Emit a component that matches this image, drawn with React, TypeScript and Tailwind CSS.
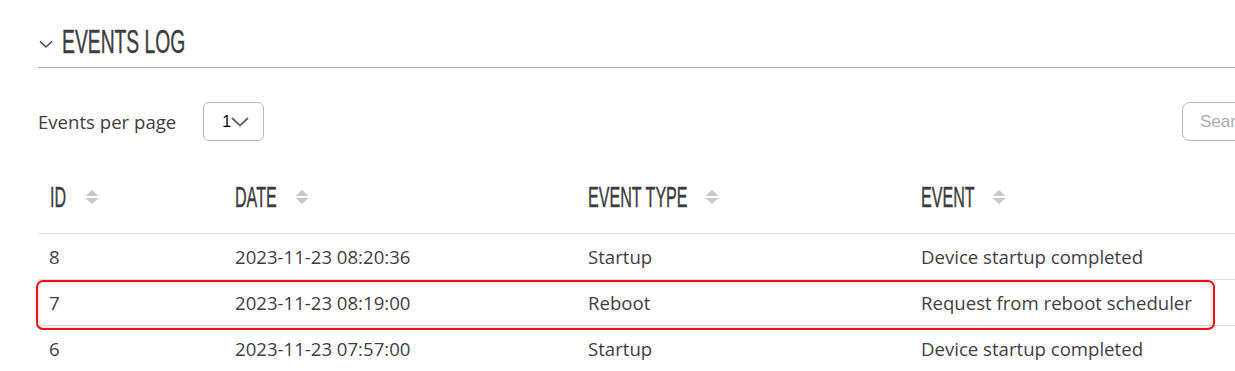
const rows = [
  { id: 8, date: "2023-11-23 08:20:36", type: "Startup", event: "Device startup completed" },
  { id: 7, date: "2023-11-23 08:19:00", type: "Reboot", event: "Request from reboot scheduler" },
  { id: 6, date: "2023-11-23 07:57:00", type: "Startup", event: "Device startup completed" },
];

const columns = [
  { label: "ID", width: "w-[17px]" },
  { label: "DATE", width: "w-[42px]" },
  { label: "EVENT TYPE", width: "w-[99px]" },
  { label: "EVENT", width: "w-[53px]" },
];

const condensed = { fontFamily: '"Liberation Sans", sans-serif' };

function SortIcon() {
  return (
    <svg width="14" height="16" viewBox="0 0 14 16" className="shrink-0">
      <path d="M7 1 L13.5 7 H0.5 Z" fill="#c8c8c8" />
      <path d="M0.5 9 H13.5 L7 15 Z" fill="#c8c8c8" />
    </svg>
  );
}

export default function App() {
  return (
    <div
      className="w-[1235px] h-[371px] overflow-hidden bg-white pl-[38px]"
      style={{ fontFamily: '"Open Sans", sans-serif' }}
    >
      <div className="w-[1344px]">
        {/* Header */}
        <div className="mt-[22px] h-[46px] flex items-start border-b border-[#acacac]">
          <svg width="14" height="9" viewBox="0 0 14 9" className="mt-[18px] ml-[1px]">
            <path d="M1 1.5 L7 7 L13 1.5" fill="none" stroke="#4a4a4a" strokeWidth="1.6" />
          </svg>
          <span className="ml-[9px] w-[124px] h-[40px] whitespace-nowrap">
            <span
              className="inline-block origin-left scale-x-[0.585] text-[33px] leading-[40px] text-[#3d3d3d] [-webkit-text-stroke:0.4px_#3d3d3d]"
              style={condensed}
            >
              EVENTS LOG
            </span>
          </span>
        </div>

        {/* Controls */}
        <div className="mt-[34px] h-[39px] flex items-center justify-between">
          <div className="flex items-center">
            <span className="text-[18.6px] text-[#404040]">Events per page</span>
            <div className="ml-[27px] w-[61px] h-[39px] rounded-md border border-[#b8b8b8] flex items-center pl-[18px]">
              <span className="text-[16px] text-black" style={{ fontFamily: '"Liberation Sans", sans-serif' }}>
                1
              </span>
              <svg width="18" height="10" viewBox="0 0 18 10">
                <path d="M1 1 L9 8.5 L17 1" fill="none" stroke="#666" strokeWidth="2" />
              </svg>
            </div>
          </div>
          <div className="w-[200px] h-[39px] rounded-lg border border-[#b8b8b8] flex items-center pl-[17px]">
            <span className="text-[17px] text-[#a9aeb5]" style={{ fontFamily: '"Liberation Sans", sans-serif' }}>
              Search
            </span>
          </div>
        </div>

        {/* Table */}
        <div className="relative mt-[20px]">
          <div className="grid grid-cols-[185px_353px_333px_1fr] h-[73px] border-b border-[#e2e2e2]">
            {columns.map((col) => (
              <div key={col.label} className="flex items-center pl-[12px]">
                <span className={`${col.width} h-[36px] whitespace-nowrap`}>
                  <span
                    className="inline-block origin-left scale-x-[0.555] text-[29px] leading-[36px] text-[#3d3d3d] [-webkit-text-stroke:0.45px_#3d3d3d]"
                    style={condensed}
                  >
                    {col.label}
                  </span>
                </span>
                <span className="ml-[18px]">
                  <SortIcon />
                </span>
              </div>
            ))}
          </div>
          {rows.map((row) => (
            <div
              key={row.id}
              className="grid grid-cols-[185px_353px_333px_1fr] h-[46px] border-b border-[#e2e2e2] text-[18.6px] text-[#3f3f3f] items-center"
            >
              <div className="pl-[11px]">{row.id}</div>
              <div className="pl-[12px]">{row.date}</div>
              <div className="pl-[12px]">{row.type}</div>
              <div className="pl-[12px]">{row.event}</div>
            </div>
          ))}

          {/* Highlight annotation */}
          <div className="absolute left-[-2px] top-[119px] w-[1179px] h-[50px] rounded-[7px] border-2 border-[#ee1111] shadow-[inset_0_0_5px_rgba(0,0,0,0.18)]" />
        </div>
      </div>
    </div>
  );
}
